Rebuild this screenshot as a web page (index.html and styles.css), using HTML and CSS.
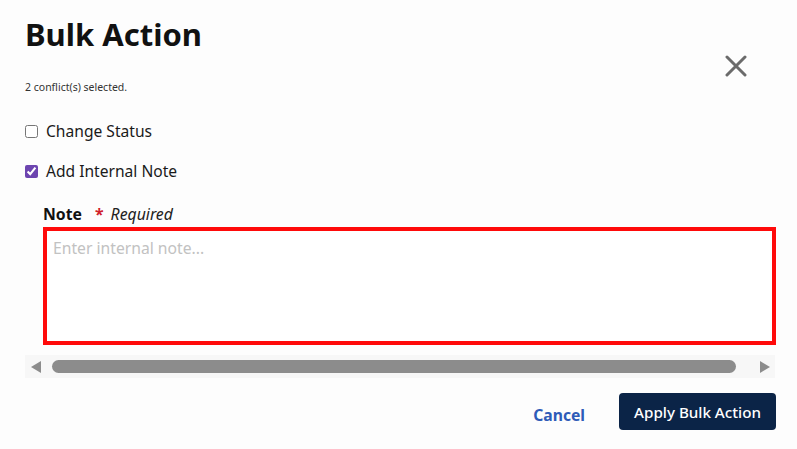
FILE: index.html
```html
<!DOCTYPE html>
<html lang="en">
<head>
    <meta charset="UTF-8">
    <meta name="viewport" content="width=device-width, initial-scale=1.0">
    <title>Bulk Action</title>
    <link rel="stylesheet" href="styles.css">
</head>
<body>
    <div class="dialog">
        <div class="header">
            <div class="heading">
                <h1 class="title">Bulk Action</h1>
                <p class="count">2 conflict(s) selected.</p>
            </div>
            <button class="close-btn" aria-label="Close">
                <svg width="22" height="22" viewBox="0 0 22 22">
                    <path d="M2 2 L20 20 M20 2 L2 20" stroke="#6b6b6b" stroke-width="3" stroke-linecap="round"/>
                </svg>
            </button>
        </div>

        <label class="option">
            <input type="checkbox">
            <span>Change Status</span>
        </label>
        <label class="option">
            <input type="checkbox" checked>
            <span>Add Internal Note</span>
        </label>

        <div class="note">
            <div class="note-label">
                <span class="label">Note</span>
                <span class="star">*</span>
                <span class="required">Required</span>
            </div>
            <textarea class="note-input" placeholder="Enter internal note..."></textarea>
        </div>

        <!-- horizontal scroller under the form -->
        <div class="scrollbar">
            <span class="arrow arrow-left"></span>
            <div class="track"><div class="thumb"></div></div>
            <span class="arrow arrow-right"></span>
        </div>

        <div class="actions">
            <button class="cancel-btn">Cancel</button>
            <button class="apply-btn">Apply Bulk Action</button>
        </div>
    </div>
</body>
</html>
```

FILE: styles.css
```css
body {
    margin: 0;
    padding: 0;
    font-family: "Noto Sans", "Open Sans", sans-serif;
    background-color: #fdfdfd;
    color: #1a1a1a;
}
.dialog {
    padding: 12px 21px 0 25px;
}
.header {
    display: flex;
    justify-content: space-between;
    align-items: flex-start;
}
.title {
    margin: 0;
    font-size: 31px;
    font-weight: 700;
    line-height: 44px;
    color: #111;
}
.count {
    margin: 24px 0 0;
    font-size: 10.5px;
    color: #333;
}
.close-btn {
    background: none;
    border: none;
    padding: 0;
    margin: 43px 29px 0 0;
    cursor: pointer;
    line-height: 0;
}
.option {
    display: flex;
    align-items: center;
    gap: 8px;
    font-size: 15.6px;
    line-height: 22px;
    color: #1a1a1a;
}
.option:first-of-type {
    margin-top: 26px;
}
.option + .option {
    margin-top: 18px;
}
.option input {
    width: 13px;
    height: 13px;
    margin: 0;
    accent-color: #6d45b0;
}
.note {
    padding: 0 0 0 18px;
    margin-top: 21px;
}
.note-label {
    display: flex;
    align-items: baseline;
    font-size: 15.8px;
    line-height: 22px;
}
.label {
    font-weight: 700;
    color: #111;
}
.star {
    color: #d0202a;
    font-weight: 700;
    margin: 0 7px 0 13px;
}
.required {
    font-style: italic;
    color: #222;
}
.note-input {
    display: block;
    box-sizing: border-box;
    width: 733px;
    height: 118px;
    margin-top: 2px;
    padding: 6px 6px;
    border: 4px solid #ff0a0a;
    background: #fff;
    font-family: inherit;
    font-size: 15.7px;
    resize: none;
    outline: none;
}
.note-input::placeholder {
    color: #c2c2c2;
}
.scrollbar {
    display: flex;
    align-items: center;
    width: 750px;
    height: 23px;
    margin-top: 10px;
    background: #f7f7f7;
}
.arrow {
    width: 0;
    height: 0;
    border-top: 6px solid transparent;
    border-bottom: 6px solid transparent;
}
.arrow-left {
    margin: 0 11px 0 6px;
    border-right: 10px solid #8c8c8c;
}
.arrow-right {
    margin: 0 5px 0 24px;
    border-left: 10px solid #8c8c8c;
}
.track {
    flex: 1;
}
.thumb {
    height: 13px;
    border-radius: 7px;
    background: #8c8c8c;
}
.actions {
    display: flex;
    justify-content: flex-end;
    align-items: center;
    gap: 34px;
    margin-top: 15px;
}
.cancel-btn {
    background: none;
    border: none;
    padding: 0;
    margin-top: 6px;
    font-family: inherit;
    font-size: 15.7px;
    font-weight: 700;
    color: #2e5bb8;
    cursor: pointer;
}
.apply-btn {
    background-color: #0b2447;
    color: #fff;
    border: none;
    border-radius: 4px;
    padding: 0 15px;
    height: 37px;
    font-family: inherit;
    font-size: 15.2px;
    font-weight: 500;
    cursor: pointer;
}
```
